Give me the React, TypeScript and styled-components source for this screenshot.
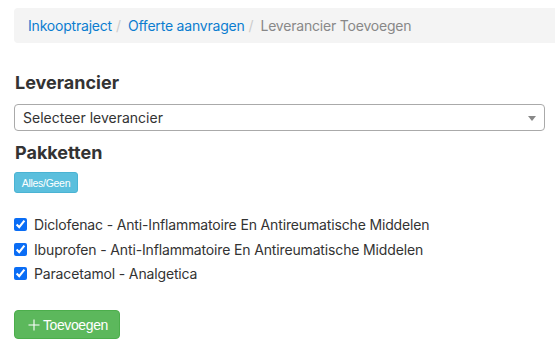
import React from "react";
import styled, { createGlobalStyle } from "styled-components";

const Global = createGlobalStyle`
  html, body { margin: 0; padding: 0; background: #fff; }
  body { font-family: Inter, "Noto Sans", sans-serif; color: #333; overflow: hidden; }
  * { box-sizing: border-box; }
`;

const Page = styled.div`
  padding: 8px 0 0 14px;
  width: 555px;
  height: 353px;
  overflow: hidden;
`;

const Breadcrumb = styled.nav`
  display: flex;
  align-items: center;
  height: 35px;
  margin-right: -12px;
  padding: 0 14px;
  background: #f4f4f4;
  border-radius: 4px;
  font-size: 14px;
  letter-spacing: -0.2px;
`;

const Crumb = styled.a<{ $active?: boolean }>`
  color: ${(p) => (p.$active ? "#888" : "#0b7dd0")};
  text-decoration: none;
  white-space: nowrap;
`;

const Sep = styled.span`
  color: #ccc;
  padding: 0 7px 0 4px;
`;

const Title = styled.h3<{ $top: number }>`
  margin: ${(p) => p.$top}px 0 0 1px;
  font-size: 18px;
  line-height: 22px;
  font-weight: 700;
  color: #333;
`;

const Select = styled.div`
  display: flex;
  align-items: center;
  justify-content: space-between;
  margin: 10px 10px 0 0;
  height: 27px;
  padding: 0 8px 0 8px;
  border: 1px solid #aaa;
  border-radius: 4px;
  font-size: 14px;
  color: #333;
`;

const Arrow = styled.span`
  width: 0;
  height: 0;
  border-left: 4px solid transparent;
  border-right: 4px solid transparent;
  border-top: 5px solid #888;
  margin-top: 1px;
`;

const SmallButton = styled.button`
  display: block;
  margin-top: 8px;
  height: 21px;
  width: 64px;
  padding: 0;
  background: #5bbfdd;
  border: 1px solid #4ab3d3;
  border-radius: 3px;
  color: #fff;
  font-family: "Liberation Sans", Arial, sans-serif;
  font-size: 10.5px;
  letter-spacing: -0.3px;
`;

const List = styled.div`
  margin-top: 19.5px;
  display: flex;
  flex-direction: column;
`;

const Row = styled.label`
  display: flex;
  align-items: center;
  height: 24.5px;
  gap: 7px;
  font-size: 14px;
  letter-spacing: -0.15px;
  color: #333;
`;

const Check = styled.input`
  margin: 0;
  width: 13px;
  height: 13px;
  accent-color: #0a6df5;
`;

const AddButton = styled.button`
  display: flex;
  align-items: center;
  gap: 3px;
  margin-top: 24px;
  height: 29px;
  width: 106px;
  padding: 0 0 0 13px;
  background: #5cb85c;
  border: 1px solid #4cae4c;
  border-radius: 4px;
  color: #fff;
  font-family: "Liberation Sans", Arial, sans-serif;
  font-size: 14px;
  letter-spacing: -0.4px;
`;

const items = [
  "Diclofenac - Anti-Inflammatoire En Antireumatische Middelen",
  "Ibuprofen - Anti-Inflammatoire En Antireumatische Middelen",
  "Paracetamol - Analgetica",
];

export default function App() {
  return (
    <>
      <Global />
      <Page>
        <Breadcrumb>
          <Crumb href="#">Inkooptraject</Crumb>
          <Sep>/</Sep>
          <Crumb href="#">Offerte aanvragen</Crumb>
          <Sep>/</Sep>
          <Crumb $active>Leverancier Toevoegen</Crumb>
        </Breadcrumb>
        <Title $top={29}>Leverancier</Title>
        <Select>
          <span>Selecteer leverancier</span>
          <Arrow />
        </Select>
        <Title $top={11}>Pakketten</Title>
        <SmallButton>Alles/Geen</SmallButton>
        <List>
          {items.map((t) => (
            <Row key={t}>
              <Check type="checkbox" defaultChecked />
              <span>{t}</span>
            </Row>
          ))}
        </List>
        <AddButton>
          <svg width="12" height="12" viewBox="0 0 12 12">
            <path d="M6 0.5v11M0.5 6h11" stroke="#fff" strokeWidth="1.1" fill="none" />
          </svg>
          <span>Toevoegen</span>
        </AddButton>
      </Page>
    </>
  );
}
